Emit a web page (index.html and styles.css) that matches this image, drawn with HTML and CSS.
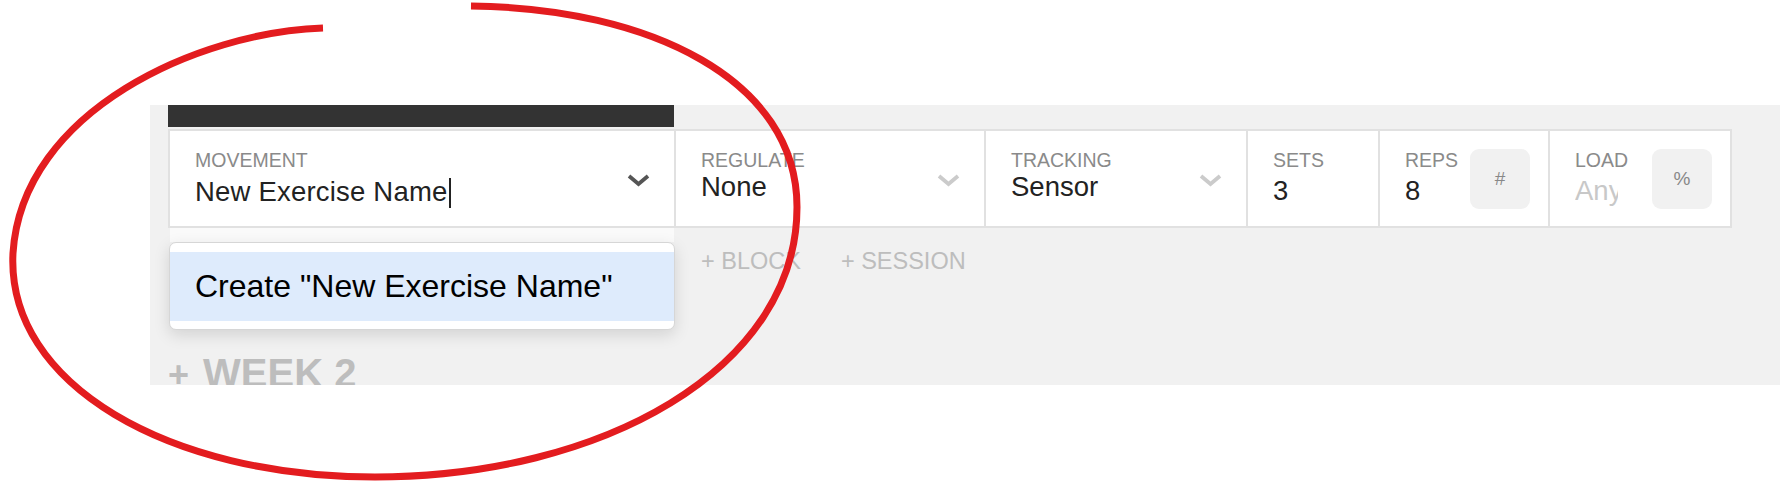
FILE: index.html
```html
<!DOCTYPE html>
<html lang="en">
<head>
<meta charset="utf-8">
<title>Program editor</title>
<link rel="stylesheet" href="styles.css">
</head>
<body>
<div class="page">
  <section class="program">
    <div class="tab"></div>
    <div class="row">
      <div class="cell cell-movement select">
        <div class="field">
          <div class="label">MOVEMENT</div>
          <div class="value input movement-input">New Exercise Name<span class="caret"></span></div>
        </div>
        <svg class="chevron" viewBox="0 0 23 13"><polyline points="2,2 11.5,10 21,2" fill="none" stroke="#555" stroke-width="3.8"/></svg>
        <div class="menu-gap"></div>
        <div class="menu">
          <div class="option">Create "New Exercise Name"</div>
        </div>
      </div>
      <div class="cell cell-regulate select">
        <div class="field">
          <div class="label">REGULATE</div>
          <div class="value">None</div>
        </div>
        <svg class="chevron" viewBox="0 0 23 13"><polyline points="2,2 11.5,10 21,2" fill="none" stroke="#cbcbcb" stroke-width="3.8"/></svg>
      </div>
      <div class="cell cell-tracking select">
        <div class="field">
          <div class="label">TRACKING</div>
          <div class="value">Sensor</div>
        </div>
        <svg class="chevron" viewBox="0 0 23 13"><polyline points="2,2 11.5,10 21,2" fill="none" stroke="#cbcbcb" stroke-width="3.8"/></svg>
      </div>
      <div class="cell cell-sets">
        <div class="field">
          <div class="label">SETS</div>
          <div class="value input">3</div>
        </div>
      </div>
      <div class="cell cell-reps">
        <div class="field">
          <div class="label">REPS</div>
          <div class="value input">8</div>
        </div>
        <div class="unit">#</div>
      </div>
      <div class="cell cell-load">
        <div class="field">
          <div class="label">LOAD</div>
          <div class="value input placeholder">Any</div>
        </div>
        <div class="unit">%</div>
      </div>
    </div>
    <div class="actions">
      <span>+ BLOCK</span>
      <span>+ SESSION</span>
    </div>
    <h2 class="week"><span class="plus">+</span>WEEK 2</h2>
  </section>
  <svg class="annotation" viewBox="0 0 1780 494">
    <path d="M 323 28 C 200 32, 22 110, 13 253 C 6 385, 170 477, 375 477 C 600 477, 797 370, 797 207 C 797 80, 650 8, 471 6" fill="none" stroke="#e31c1f" stroke-width="7" stroke-linecap="butt"/>
  </svg>
</div>
</body>
</html>
```
FILE: styles.css
```css
* {
  box-sizing: border-box;
}

html,
body {
  margin: 0;
  padding: 0;
}

body {
  width: 1780px;
  height: 494px;
  overflow: hidden;
  background: #ffffff;
  font-family: "Liberation Sans", Arial, sans-serif;
}

.page {
  position: relative;
  width: 1780px;
  height: 494px;
  overflow: hidden;
}

.program {
  margin: 105px 0 0 150px;
  height: 280px;
  background: #f1f1f1;
  padding-left: 18px;
  overflow: hidden;
}

.tab {
  width: 506px;
  height: 22px;
  background: #333333;
}

.row {
  display: flex;
  width: 1564px;
  height: 99px;
  margin-top: 2px;
  background: #ffffff;
  border-top: 2px solid #e1e1e1;
  border-bottom: 2px solid #e1e1e1;
}

.cell {
  position: relative;
  display: flex;
  align-items: flex-start;
  border-left: 2px solid #e1e1e1;
  padding: 18px 18px 0 25px;
}

.cell.select {
  padding-right: 24px;
}

.cell-movement { width: 506px; }
.cell-regulate { width: 310px; }
.cell-tracking { width: 262px; }
.cell-sets { width: 132px; }
.cell-reps { width: 170px; }
.cell-load {
  width: 184px;
  border-right: 2px solid #e1e1e1;
}

.field {
  flex: 1;
  min-width: 0;
}

.label {
  font-size: 19.5px;
  line-height: 22px;
  color: #8a8a8a;
  white-space: nowrap;
}

.value {
  font-size: 27.5px;
  line-height: 32px;
  color: #222222;
  white-space: nowrap;
}

.value.input {
  margin-top: 4px;
}

.value.movement-input {
  margin-top: 5px;
  letter-spacing: 0.2px;
}

.placeholder {
  color: #c8c8c8;
  width: 43px;
  overflow: hidden;
}

.caret {
  display: inline-block;
  width: 2px;
  height: 30px;
  margin-left: 1px;
  background: #222222;
  vertical-align: -7px;
}

.chevron {
  flex: none;
  width: 23px;
  height: 13px;
  margin-top: 25px;
  overflow: visible;
}

.unit {
  flex: none;
  width: 60px;
  height: 60px;
  border-radius: 9px;
  background: #f1f1f1;
  display: flex;
  align-items: center;
  justify-content: center;
  font-size: 19px;
  color: #888888;
}

.menu-gap {
  position: absolute;
  top: calc(100% + 2px);
  left: 0;
  width: 504px;
  height: 14px;
  background: #fafafa;
}

.menu {
  position: absolute;
  top: calc(100% + 16px);
  left: -1px;
  width: 506px;
  background: #ffffff;
  border: 1px solid #d6d6d6;
  border-radius: 7px;
  padding: 9px 0 8px;
  box-shadow: 0 5px 16px rgba(0, 0, 0, 0.13);
  z-index: 2;
}

.option {
  height: 69px;
  line-height: 69px;
  padding-left: 25px;
  background: #deebfc;
  font-size: 32px;
  color: #000000;
  white-space: nowrap;
}

.actions {
  display: flex;
  gap: 40px;
  margin-top: 19px;
  padding-left: 533px;
  font-size: 23.5px;
  line-height: 28px;
  color: #bdbdbd;
}

.week {
  display: flex;
  align-items: baseline;
  margin: 74px 0 0;
  font-size: 40px;
  line-height: 48px;
  font-weight: bold;
  color: #bdbdbd;
}

.plus {
  font-size: 36px;
  margin-right: 14px;
}

.annotation {
  position: absolute;
  left: 0;
  top: 0;
  width: 1780px;
  height: 494px;
  pointer-events: none;
  z-index: 5;
}
```
